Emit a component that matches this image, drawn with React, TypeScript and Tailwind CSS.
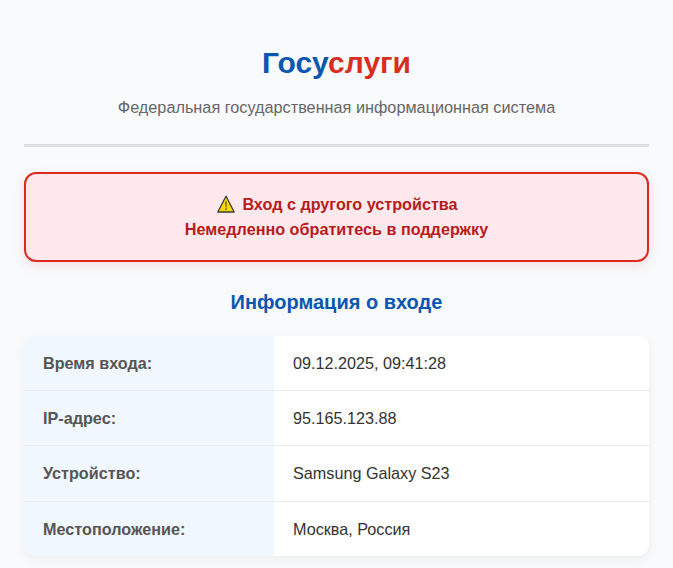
const rows = [
  { label: 'Время входа:', value: '09.12.2025, 09:41:28' },
  { label: 'IP-адрес:', value: '95.165.123.88' },
  { label: 'Устройство:', value: 'Samsung Galaxy S23' },
  { label: 'Местоположение:', value: 'Москва, Россия' },
];

function WarningIcon() {
  return (
    <svg width="18" height="18" viewBox="0 0 18 18" className="inline-block align-[-3px] ml-[2px] mr-[7px]">
      <path d="M9 1.2 L17.2 17 L0.8 17 Z" fill="#fcd800" stroke="#3a3a3a" strokeWidth="1.3" strokeLinejoin="round" />
      <path d="M8.2 6.5 h1.6 l-0.3 6 h-1 Z" fill="#6b5a00" />
      <rect x="8.2" y="13.4" width="1.6" height="1.6" fill="#6b5a00" />
    </svg>
  );
}

export default function App() {
  return (
    <div className="min-h-screen bg-[#f8fafc] px-6 pt-[41px] font-['Liberation_Sans',Arial,sans-serif] overflow-hidden h-[568px]">
      {/* Header */}
      <div className="text-center border-b-[3px] border-[#dedfe2] pb-[25px] mb-[25px]">
        <h1 className="text-[30px] leading-[44px] font-bold text-[#0b56b3]">
          Госу<span className="text-[#d92d20]">слуги</span>
        </h1>
        <p className="text-[16.26px] leading-[24px] text-[#666666] mt-[10px]">
          Федеральная государственная информационная система
        </p>
      </div>

      {/* Alert */}
      <div className="bg-[#ffe9ec] border-2 border-[#dc2a20] rounded-xl py-[18px] text-center shadow-[0_4px_12px_rgba(220,42,32,0.12)] mb-[26px]">
        <p className="text-[16.2px] leading-[25px] font-bold text-[#b71c1c]">
          <WarningIcon />
          Вход с другого устройства
        </p>
        <p className="text-[16.2px] leading-[25px] font-bold text-[#b71c1c]">
          Немедленно обратитесь в поддержку
        </p>
      </div>

      <h2 className="text-xl leading-[28px] font-bold text-[#0b56b3] text-center mb-5">
        Информация о входе
      </h2>

      {/* Login info */}
      <div className="bg-white rounded-xl overflow-hidden shadow-[0_4px_12px_rgba(0,0,0,0.05)]">
        {rows.map((row, i) => (
          <div key={row.label} className={`grid grid-cols-[250px_1fr] text-[16.2px] ${i < rows.length - 1 ? 'border-b border-[#e8eaed]' : ''}`}>
            <div className="bg-[#f0f7ff] px-[19px] py-[18px] leading-[18.2px] font-bold text-[#555555]">{row.label}</div>
            <div className="px-[19px] py-[18px] leading-[18.2px] text-[#333333]">{row.value}</div>
          </div>
        ))}
      </div>
    </div>
  );
}
